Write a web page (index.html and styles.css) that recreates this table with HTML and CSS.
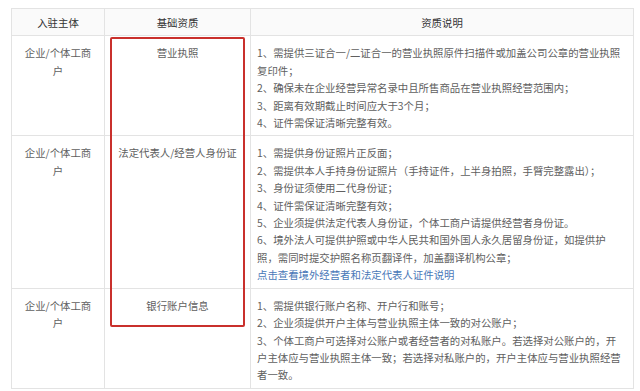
FILE: index.html
```html
<!DOCTYPE html>
<html lang="zh-CN">
<head>
<meta charset="utf-8">
<link rel="stylesheet" href="styles.css">
</head>
<body>
<div class="wrap">
  <table class="qual">
    <colgroup>
      <col class="c1"><col class="c2"><col class="c3">
    </colgroup>
    <thead>
      <tr><th>入驻主体</th><th>基础资质</th><th>资质说明</th></tr>
    </thead>
    <tbody>
      <tr>
        <td class="center">企业/个体工商户</td>
        <td class="center">营业执照</td>
        <td class="desc">1、需提供三证合一/二证合一的营业执照原件扫描件或加盖公司公章的营业执照<br>复印件；<br>2、确保未在企业经营异常名录中且所售商品在营业执照经营范围内；<br>3、距离有效期截止时间应大于3个月；<br>4、证件需保证清晰完整有效。</td>
      </tr>
      <tr>
        <td class="center">企业/个体工商户</td>
        <td class="center">法定代表人/经营人身份证</td>
        <td class="desc">1、需提供身份证照片正反面；<br>2、需提供本人手持身份证照片（手持证件，上半身拍照，手臂完整露出）；<br>3、身份证须使用二代身份证；<br>4、证件需保证清晰完整有效；<br>5、企业须提供法定代表人身份证，个体工商户请提供经营者身份证。<br>6、境外法人可提供护照或中华人民共和国外国人永久居留身份证，如提供护<br>照，需同时提交护照名称页翻译件，加盖翻译机构公章；<br><span class="link">点击查看境外经营者和法定代表人证件说明</span></td>
      </tr>
      <tr>
        <td class="center">企业/个体工商户</td>
        <td class="center">银行账户信息</td>
        <td class="desc">1、需提供银行账户名称、开户行和账号；<br>2、企业须提供开户主体与营业执照主体一致的对公账户；<br>3、个体工商户可选择对公账户或者经营者的对私账户。若选择对公账户的，开<br>户主体应与营业执照主体一致；若选择对私账户的，开户主体应与营业执照经营<br>者一致。</td>
      </tr>
    </tbody>
  </table>
  <div class="mark"></div>
</div>
</body>
</html>
```

FILE: styles.css
```css
html, body {
  margin: 0;
  padding: 0;
  background: #ffffff;
}
body {
  font-family: "Microsoft YaHei", "Noto Sans CJK SC", sans-serif;
  font-size: 10.4px;
  line-height: 17.4px;
  color: #606060;
}
.wrap {
  position: relative;
  padding: 8px 0 0 11px;
}
.qual {
  border-collapse: collapse;
  table-layout: fixed;
  width: 622px;
}
.c1 { width: 93px; }
.c2 { width: 146px; }
.c3 { width: 383px; }
.qual th, .qual td {
  border: 1px solid #e3e3e3;
  vertical-align: top;
  text-align: left;
}
.qual th {
  font-weight: normal;
  color: #333333;
  text-align: center;
  background: #fafafa;
  padding: 5px 6px 4px;
}
.qual td {
  padding: 8px 6px 4px 6px;
}
.qual td.desc {
  white-space: nowrap;
  overflow: hidden;
  padding-right: 2px;
}
.qual td.center {
  text-align: center;
  padding-left: 8px;
  padding-right: 8px;
}
.link {
  color: #4a78b8;
}
.mark {
  position: absolute;
  left: 110px;
  top: 37px;
  width: 131px;
  height: 286px;
  border: 2px solid #c9302c;
  border-radius: 2px;
}
```
